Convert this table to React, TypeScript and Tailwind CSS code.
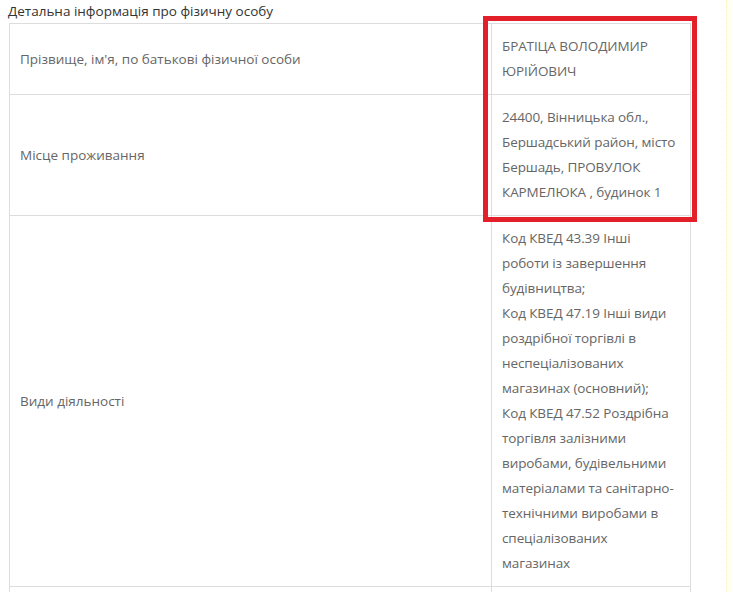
import React from "react";

const rows: { label: string; value: string[] }[] = [
  {
    label: "Прізвище, ім'я, по батькові фізичної особи",
    value: ["БРАТІЦА ВОЛОДИМИР ЮРІЙОВИЧ"],
  },
  {
    label: "Місце проживання",
    value: ["24400, Вінницька обл., Бершадський район, місто Бершадь, ПРОВУЛОК КАРМЕЛЮКА , будинок 1"],
  },
  {
    label: "Види діяльності",
    value: [
      "Код КВЕД 43.39 Інші роботи із завершення будівництва;",
      "Код КВЕД 47.19 Інші види роздрібної торгівлі в неспеціалізованих магазинах (основний);",
      "Код КВЕД 47.52 Роздрібна торгівля залізними виробами, будівельними матеріалами та санітарно-технічними виробами в спеціалізованих магазинах",
    ],
  },
];

export default function App() {
  return (
    <div
      className="relative w-[733px] h-[592px] overflow-hidden bg-white"
      style={{ fontFamily: "'Open Sans', 'Noto Sans', sans-serif" }}
    >
      <div className="absolute right-0 top-0 h-full w-[7px] bg-[#fffff2] border-l border-dotted border-[#f3f0b8]" />
      <div className="pl-[8px] h-[23px] text-[13.5px] leading-[22px] text-[#333]">
        Детальна інформація про фізичну особу
      </div>
      <div className="ml-[9px] w-[682px] border-l border-r border-t border-[#dddddd]">
        {rows.map((r, i) => (
          <div key={i} className="flex border-b border-[#dddddd]">
            <div className="w-[482px] shrink-0 border-r border-[#dddddd] px-[10px] py-[10px] flex items-center text-[13.5px] leading-[25px] text-[#666]">
              {r.label}
            </div>
            <div className="w-[198px] pl-[10px] pr-[13px] py-[10px] text-[13.5px] leading-[25px] text-[#666] tracking-[-0.1px]">
              {r.value.map((v, j) => (
                <div key={j}>{v}</div>
              ))}
            </div>
          </div>
        ))}
        <div className="flex h-[20px]">
          <div className="w-[482px] shrink-0 border-r border-[#dddddd]" />
        </div>
      </div>
      <div className="absolute left-[483px] top-[16px] w-[214px] h-[206px] border-[5px] border-[#e3202a]" />
    </div>
  );
}
